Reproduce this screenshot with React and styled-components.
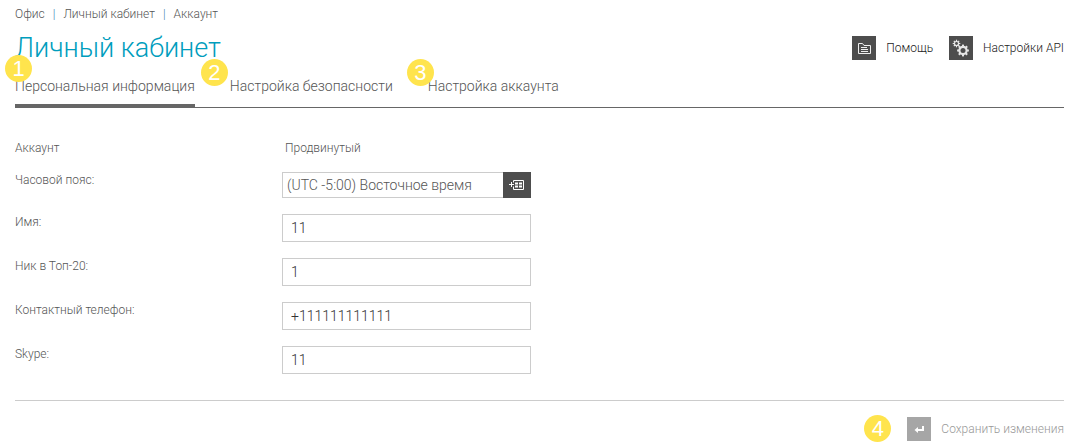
import React from "react";
import styled, { createGlobalStyle } from "styled-components";

const GlobalStyle = createGlobalStyle`
  *, *::before, *::after { box-sizing: border-box; }
  body {
    margin: 0;
    background: #fff;
    color: #555;
    font: 300 12px/16px Roboto, "Liberation Sans", sans-serif;
  }
  button, input { font: inherit; color: inherit; }
  a { color: inherit; text-decoration: none; }
`;

const Page = styled.main`
  padding: 6px 11px 4px 15px;
`;

const Breadcrumbs = styled.nav`
  display: flex;
  gap: 8px;
`;

const Separator = styled.span`
  color: #3f7fae;
`;

const Header = styled.header`
  display: flex;
  justify-content: space-between;
  align-items: center;
  height: 52px;
`;

const Title = styled.h1`
  margin: 0;
  color: #009dbd;
  font-size: 27px;
  line-height: 32px;
  font-weight: 300;
`;

const Actions = styled.div`
  display: flex;
  gap: 16px;
`;

const Action = styled.button`
  display: flex;
  align-items: center;
  gap: 10px;
  padding: 0;
  border: 0;
  background: none;
  color: ${(p) => (p.$muted ? "#999" : "#222")};
  cursor: pointer;
`;

const IconTile = styled.span`
  display: flex;
  width: 24px;
  height: 24px;
  background: ${(p) => (p.$muted ? "#a6a6a6" : "#4d4d4d")};
`;

const Tabs = styled.nav`
  display: flex;
  gap: 35px;
  border-bottom: 1px solid #666;
`;

const Tab = styled.a`
  position: relative;
  height: 33px;
  padding-top: 2px;
  border-bottom: 3px solid ${(p) => (p.$active ? "#666" : "transparent")};
  font-size: 14px;
  line-height: 20px;
`;

const Badge = styled.span`
  display: flex;
  align-items: center;
  justify-content: center;
  width: 27px;
  height: 27px;
  border-radius: 50%;
  background: #ffe44d;
  color: #fff;
  font: 22px/26px "Liberation Sans", sans-serif;
`;

const TabBadge = styled(Badge)`
  position: absolute;
  top: ${(p) => p.$top}px;
  left: ${(p) => p.$left}px;
`;

const Form = styled.form`
  display: flex;
  flex-direction: column;
  gap: 16px;
  padding-top: 32px;
`;

const Row = styled.div`
  display: grid;
  grid-template-columns: 267px minmax(0, 249px);
  align-items: start;
`;

const Value = styled.span`
  padding-left: 3px;
`;

const TextInput = styled.input`
  width: 100%;
  height: 28px;
  padding: 0 8px;
  border: 1px solid #ccc;
  border-radius: 0;
  background: #fff;
  color: #333;
  font-size: 14px;
`;

const Picker = styled.div`
  display: flex;
  height: 26px;
`;

const PickerInput = styled(TextInput)`
  flex: 1;
  min-width: 0;
  height: 26px;
  padding: 0 4px;
  border-right: 0;
  color: #555;
`;

const PickerButton = styled.button`
  display: flex;
  align-items: center;
  justify-content: center;
  width: 28px;
  padding: 0;
  border: 0;
  background: #4d4d4d;
  cursor: pointer;
`;

const Footer = styled.footer`
  display: flex;
  justify-content: flex-end;
  align-items: center;
  gap: 16px;
  margin-top: 10px;
  padding-top: 14px;
  border-top: 1px solid #ccc;
`;

const FolderIcon = () => (
  <svg width="24" height="24" viewBox="0 0 24 24" fill="none" stroke="#eee" aria-hidden="true">
    <path d="M6.5 17.5V7.5H10.5L12 9.5H18.5V17.5Z" />
    <path d="M9 11.5H15M9 13.5H16M9 15.5H16" />
  </svg>
);

const Gear = ({ x, y, r, hole, teeth, tooth }) => (
  <g transform={`translate(${x} ${y})`}>
    <circle r={r} fill="#e6e6e6" />
    {Array.from({ length: teeth }, (_, i) => (
      <rect
        key={i}
        x={-tooth / 2}
        y={-r - 1.2}
        width={tooth}
        height={2.4}
        fill="#e6e6e6"
        transform={`rotate(${(i * 360) / teeth})`}
      />
    ))}
    <circle r={hole} fill="#4d4d4d" />
  </g>
);

const GearsIcon = () => (
  <svg width="24" height="24" viewBox="0 0 24 24" aria-hidden="true">
    <Gear x={7.5} y={7.5} r={2.6} hole={1.4} teeth={8} tooth={1.2} />
    <Gear x={14} y={14.5} r={4.7} hole={2.5} teeth={8} tooth={2} />
  </svg>
);

const EnterIcon = () => (
  <svg width="24" height="24" viewBox="0 0 24 24" aria-hidden="true">
    <path d="M16 9V13H10" fill="none" stroke="#fff" strokeWidth="2" />
    <path d="M7.5 13L11 10V16Z" fill="#fff" />
  </svg>
);

const TableIcon = () => (
  <svg width="16" height="12" viewBox="0 0 16 12" fill="none" stroke="#fff" aria-hidden="true">
    <path d="M0 5.5H5M2.5 3V8" />
    <path d="M4.5 3.5V1.5H14.5V10.5H4.5V7.5" />
    <path d="M6 4.5H9M10 4.5H13M6 7.5H9M10 7.5H13" strokeWidth="2" />
  </svg>
);

const tabs = [
  { label: "Персональная информация", top: -19, left: -10, active: true },
  { label: "Настройка безопасности", top: -15, left: -29 },
  { label: "Настройка аккаунта", top: -15, left: -21 },
];

const fields = [
  { id: "name", label: "Имя:", value: "11" },
  { id: "nick", label: "Ник в Топ-20:", value: "1" },
  { id: "phone", label: "Контактный телефон:", value: "+111111111111" },
  { id: "skype", label: "Skype:", value: "11" },
];

export default function App() {
  return (
    <>
      <GlobalStyle />
      <Page>
        <Breadcrumbs>
          <a href="#office">Офис</a>
          <Separator>|</Separator>
          <a href="#cabinet">Личный кабинет</a>
          <Separator>|</Separator>
          <a href="#account">Аккаунт</a>
        </Breadcrumbs>

        <Header>
          <Title>Личный кабинет</Title>
          <Actions>
            <Action type="button">
              <IconTile><FolderIcon /></IconTile>
              Помощь
            </Action>
            <Action type="button">
              <IconTile><GearsIcon /></IconTile>
              Настройки API
            </Action>
          </Actions>
        </Header>

        <Tabs>
          {tabs.map((tab, i) => (
            <Tab key={tab.label} href={`#tab-${i + 1}`} $active={tab.active}>
              {tab.label}
              <TabBadge $top={tab.top} $left={tab.left}>{i + 1}</TabBadge>
            </Tab>
          ))}
        </Tabs>

        <Form id="profile" onSubmit={(e) => e.preventDefault()}>
          <Row>
            <span>Аккаунт</span>
            <Value>Продвинутый</Value>
          </Row>
          <Row>
            <label htmlFor="timezone">Часовой пояс:</label>
            <Picker>
              <PickerInput id="timezone" readOnly value="(UTC -5:00) Восточное время" />
              <PickerButton type="button" aria-label="Выбрать часовой пояс">
                <TableIcon />
              </PickerButton>
            </Picker>
          </Row>
          {fields.map((field) => (
            <Row key={field.id}>
              <label htmlFor={field.id}>{field.label}</label>
              <TextInput id={field.id} defaultValue={field.value} />
            </Row>
          ))}
          <Footer>
            <Badge>4</Badge>
            <Action type="submit" $muted>
              <IconTile $muted><EnterIcon /></IconTile>
              Сохранить изменения
            </Action>
          </Footer>
        </Form>
      </Page>
    </>
  );
}
